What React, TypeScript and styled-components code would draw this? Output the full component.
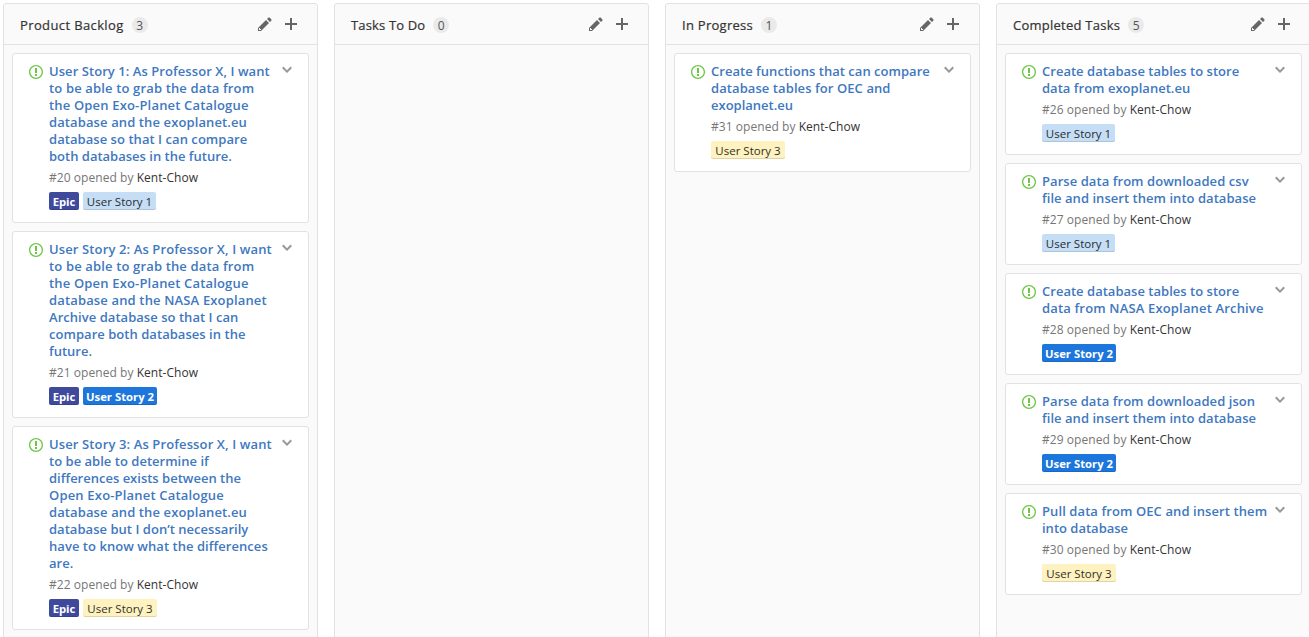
import React from 'react';
import styled, { createGlobalStyle } from 'styled-components';

const GlobalStyle = createGlobalStyle`
  * { box-sizing: border-box; }
  body {
    margin: 0;
    background: #fff;
    color: #333;
    font-family: "Open Sans", "Noto Sans", sans-serif;
    overflow: hidden;
  }
`;

const Board = styled.main`
  display: flex;
  gap: 16px;
  width: 1309px;
  height: 637px;
  padding: 3px 0 0 3px;
  overflow: hidden;
`;

const Column = styled.section`
  flex: 0 0 315px;
  height: 660px;
  background: #fafafa;
  border: 1px solid #e2e2e2;
  border-radius: 3px;
`;

const ColumnHeader = styled.header`
  display: flex;
  align-items: center;
  height: 41px;
  padding: 0 20px 0 16px;
  border-bottom: 1px solid #e2e2e2;
`;

const ColumnTitle = styled.h2<{ $spacing: number }>`
  margin: 2px 0 0;
  font-size: 13px;
  font-weight: 500;
  line-height: 20px;
  letter-spacing: ${(p) => p.$spacing}px;
  white-space: nowrap;
  -webkit-text-stroke: 0.2px currentColor;
`;

const Counter = styled.span`
  width: 16px;
  height: 16px;
  margin: 2px auto 0 8px;
  border-radius: 8px;
  background: #eaeaea;
  color: #555;
  font-size: 12px;
  line-height: 17px;
  text-align: center;
`;

const IconButton = styled.button`
  display: flex;
  margin: 0 0 0 13px;
  padding: 0;
  border: 0;
  background: none;
  color: #666;
`;

const CardList = styled.div`
  display: flex;
  flex-direction: column;
  gap: 8px;
  padding: 8px;
`;

const Card = styled.article`
  display: flex;
  align-items: flex-start;
  padding: 9px 16px 12px 16px;
  background: #fff;
  border: 1px solid #e2e2e2;
  border-radius: 3px;
`;

const StatusIcon = styled.span`
  display: flex;
  flex: 0 0 20px;
  padding-top: 1px;
  color: #6cc644;
`;

const CardBody = styled.div`
  flex: 1;
  min-width: 0;
`;

const CardTitle = styled.a`
  display: block;
  color: #4078c0;
  font-size: 13px;
  font-weight: 600;
  line-height: 17px;
`;

const TitleLine = styled.span<{ $spacing: number }>`
  display: block;
  letter-spacing: ${(p) => p.$spacing}px;
  white-space: nowrap;
`;

const Meta = styled.p`
  margin: 4px 0 6px;
  color: #767676;
  font-size: 12px;
  line-height: 17px;
  letter-spacing: 0.05px;
  white-space: nowrap;
`;

const Author = styled.span`
  color: #333;
`;

const Tags = styled.div`
  display: flex;
  gap: 4px;
`;

const Tag = styled.span<{ $bg: string; $fg: string; $bold: boolean; $width: number }>`
  width: ${(p) => p.$width}px;
  height: 18px;
  border-radius: 2px;
  background: ${(p) => p.$bg};
  color: ${(p) => p.$fg};
  box-shadow: inset 0 -1px 0 rgba(0, 0, 0, 0.12);
  font-size: ${(p) => (p.$bold ? 11.3 : 11.5)}px;
  font-weight: ${(p) => (p.$bold ? 700 : 500)};
  line-height: 19px;
  text-align: center;
  white-space: nowrap;
`;

const MenuButton = styled.button`
  display: flex;
  margin: -1px 0 0;
  padding: 0;
  border: 0;
  background: none;
  color: #999;
`;

const paths = {
  issue: 'M7 2.3c3.14 0 5.7 2.56 5.7 5.7s-2.56 5.7-5.7 5.7A5.71 5.71 0 0 1 1.3 8c0-3.14 2.56-5.7 5.7-5.7zM7 1C3.14 1 0 4.14 0 8s3.14 7 7 7 7-3.14 7-7-3.14-7-7-7zm1 3H6v5h2V4zm0 6H6v2h2v-2z',
  pencil: 'M0 12v3h3l8-8-3-3-8 8zm3 2H1v-2h1v1h1v1zm10.3-9.3L12 6 9 3l1.3-1.3a.996.996 0 0 1 1.41 0l1.59 1.59c.39.39.39 1.02 0 1.41z',
  plus: 'M12 9H7v5H5V9H0V7h5V2h2v5h5v2z',
  chevron: 'M5 11L0 6l1.5-1.5L5 8.25 8.5 4.5 10 6l-5 5z',
};

const Icon = ({ name, width }: { name: keyof typeof paths; width: number }) => (
  <svg width={width} height={16} viewBox={`0 0 ${width} 16`} fill="currentColor" aria-hidden="true">
    <path d={paths[name]} />
  </svg>
);

const tagStyles = {
  Epic: { bg: '#3f4a9c', fg: '#fff', bold: true, width: 30 },
  'User Story 1': { bg: '#c5def5', fg: '#282c30', bold: false, width: 73 },
  'User Story 2': { bg: '#1d76db', fg: '#fff', bold: true, width: 74 },
  'User Story 3': { bg: '#fef2c0', fg: '#333026', bold: false, width: 74 },
};

type TagName = keyof typeof tagStyles;
type Line = [text: string, spacing: number];
type Issue = { id: number; title: Line[]; tags: TagName[] };
type ColumnData = { name: string; spacing: number; issues: Issue[] };

const columns: ColumnData[] = [
  {
    name: 'Product Backlog',
    spacing: 0.38,
    issues: [
      {
        id: 20,
        title: [
          ['User Story 1: As Professor X, I want', 0.06],
          ['to be able to grab the data from', 0.15],
          ['the Open Exo-Planet Catalogue', 0.17],
          ['database and the exoplanet.eu', 0.11],
          ['database so that I can compare', 0.05],
          ['both databases in the future.', 0],
        ],
        tags: ['Epic', 'User Story 1'],
      },
      {
        id: 21,
        title: [
          ['User Story 2: As Professor X, I want', 0.12],
          ['to be able to grab the data from', 0.15],
          ['the Open Exo-Planet Catalogue', 0.17],
          ['database and the NASA Exoplanet', 0.15],
          ['Archive database so that I can', 0.04],
          ['compare both databases in the', 0.04],
          ['future.', 0],
        ],
        tags: ['Epic', 'User Story 2'],
      },
      {
        id: 22,
        title: [
          ['User Story 3: As Professor X, I want', 0.12],
          ['to be able to determine if', 0.02],
          ['differences exists between the', 0],
          ['Open Exo-Planet Catalogue', 0.18],
          ['database and the exoplanet.eu', 0.11],
          ['database but I don’t necessarily', 0.03],
          ['have to know what the differences', 0.05],
          ['are.', 0],
        ],
        tags: ['Epic', 'User Story 3'],
      },
    ],
  },
  { name: 'Tasks To Do', spacing: 0.15, issues: [] },
  {
    name: 'In Progress',
    spacing: 0.27,
    issues: [
      {
        id: 31,
        title: [
          ['Create functions that can compare', 0.03],
          ['database tables for OEC and', 0.08],
          ['exoplanet.eu', 0],
        ],
        tags: ['User Story 3'],
      },
    ],
  },
  {
    name: 'Completed Tasks',
    spacing: 0.25,
    issues: [
      {
        id: 26,
        title: [
          ['Create database tables to store', 0.02],
          ['data from exoplanet.eu', 0.02],
        ],
        tags: ['User Story 1'],
      },
      {
        id: 27,
        title: [
          ['Parse data from downloaded csv', 0.06],
          ['file and insert them into database', 0.04],
        ],
        tags: ['User Story 1'],
      },
      {
        id: 28,
        title: [
          ['Create database tables to store', 0.02],
          ['data from NASA Exoplanet Archive', 0.16],
        ],
        tags: ['User Story 2'],
      },
      {
        id: 29,
        title: [
          ['Parse data from downloaded json', 0.06],
          ['file and insert them into database', 0.04],
        ],
        tags: ['User Story 2'],
      },
      {
        id: 30,
        title: [
          ['Pull data from OEC and insert them', 0.09],
          ['into database', 0],
        ],
        tags: ['User Story 3'],
      },
    ],
  },
];

const IssueCard = ({ issue }: { issue: Issue }) => (
  <Card>
    <StatusIcon>
      <Icon name="issue" width={14} />
    </StatusIcon>
    <CardBody>
      <CardTitle>
        {issue.title.map(([text, spacing]) => (
          <TitleLine key={text} $spacing={spacing}>
            {text}
          </TitleLine>
        ))}
      </CardTitle>
      <Meta>
        #{issue.id} opened by <Author>Kent-Chow</Author>
      </Meta>
      <Tags>
        {issue.tags.map((name) => {
          const t = tagStyles[name];
          return (
            <Tag key={name} $bg={t.bg} $fg={t.fg} $bold={t.bold} $width={t.width}>
              {name}
            </Tag>
          );
        })}
      </Tags>
    </CardBody>
    <MenuButton aria-label="Card menu">
      <Icon name="chevron" width={10} />
    </MenuButton>
  </Card>
);

export default function App() {
  return (
    <>
      <GlobalStyle />
      <Board>
        {columns.map((column) => (
          <Column key={column.name}>
            <ColumnHeader>
              <ColumnTitle $spacing={column.spacing}>{column.name}</ColumnTitle>
              <Counter>{column.issues.length}</Counter>
              <IconButton aria-label="Edit column">
                <Icon name="pencil" width={14} />
              </IconButton>
              <IconButton aria-label="Add card">
                <Icon name="plus" width={12} />
              </IconButton>
            </ColumnHeader>
            <CardList>
              {column.issues.map((issue) => (
                <IssueCard key={issue.id} issue={issue} />
              ))}
            </CardList>
          </Column>
        ))}
      </Board>
    </>
  );
}
